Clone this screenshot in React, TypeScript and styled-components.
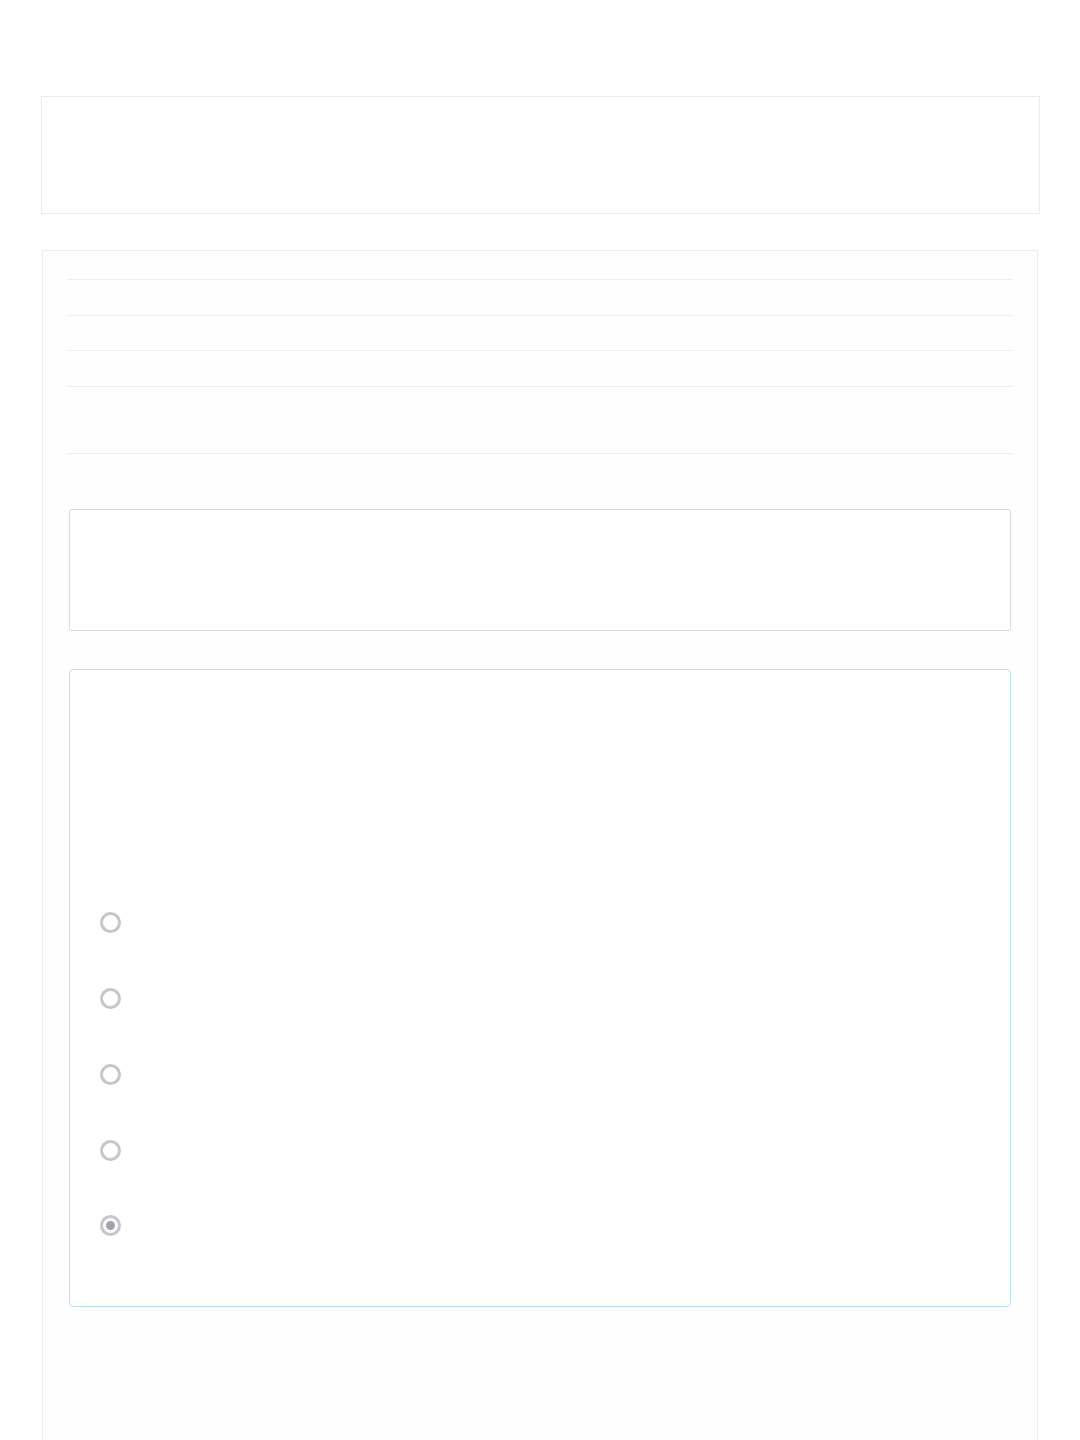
import { FC } from "react";
import styled, { createGlobalStyle } from "styled-components";

const GlobalStyle = createGlobalStyle`
  html, body {
    margin: 0;
    padding: 0;
    background: #ffffff;
    font-family: "Open Sans", "Liberation Sans", sans-serif;
  }
`;

const Page = styled.div`
  width: 1080px;
  height: 1440px;
  overflow: hidden;
  padding-top: 96px;
  box-sizing: border-box;
`;

const HeaderCard = styled.div`
  margin-left: 41px;
  width: 999px;
  height: 118px;
  box-sizing: border-box;
  border: 1px solid #ececec;
  background: #ffffff;
`;

const MainCard = styled.div`
  margin: 36px 0 0 42px;
  width: 996px;
  height: 1300px;
  box-sizing: border-box;
  border: 1px solid #ececec;
  border-bottom: none;
  background: #fefefe;
  padding: 28px 25px 0;
`;

const Rows = styled.div`
  display: flex;
  flex-direction: column;
  border-bottom: 1px solid #efefef;
`;

const Row = styled.div<{ $h: number }>`
  height: ${(p) => p.$h}px;
  box-sizing: border-box;
  border-top: 1px solid #efefef;
`;

const InputBox = styled.div`
  margin: 55px 1px 0;
  height: 122px;
  box-sizing: border-box;
  border: 1px solid #dadada;
  border-radius: 3px;
  background: #ffffff;
`;

const ChoiceBox = styled.div`
  margin: 38px 1px 0;
  height: 638px;
  box-sizing: border-box;
  border: 1px solid #b9def2;
  border-radius: 4px;
  background: #ffffff;
  padding: 215px 0 0 30px;
  display: flex;
  flex-direction: column;
`;

const Option = styled.label`
  display: flex;
  align-items: center;
  height: 75.75px;
`;

const Radio = styled.span<{ $checked?: boolean }>`
  width: 21px;
  height: 21px;
  box-sizing: border-box;
  border-radius: 50%;
  border: 3px solid #c6c6cc;
  background: #ffffff;
  display: flex;
  align-items: center;
  justify-content: center;

  &::after {
    content: "";
    display: ${(p) => (p.$checked ? "block" : "none")};
    width: 9px;
    height: 9px;
    border-radius: 50%;
    background: #a2a2ac;
  }
`;

const rowHeights = [36, 35, 36, 67];
const options = [false, false, false, false, true];

const App: FC = () => (
  <>
    <GlobalStyle />
    <Page>
      <HeaderCard />
      <MainCard>
        <Rows>
          {rowHeights.map((h, i) => (
            <Row key={i} $h={h} />
          ))}
        </Rows>
        <InputBox />
        <ChoiceBox>
          {options.map((checked, i) => (
            <Option key={i}>
              <Radio $checked={checked} />
            </Option>
          ))}
        </ChoiceBox>
      </MainCard>
    </Page>
  </>
);

export default App;
